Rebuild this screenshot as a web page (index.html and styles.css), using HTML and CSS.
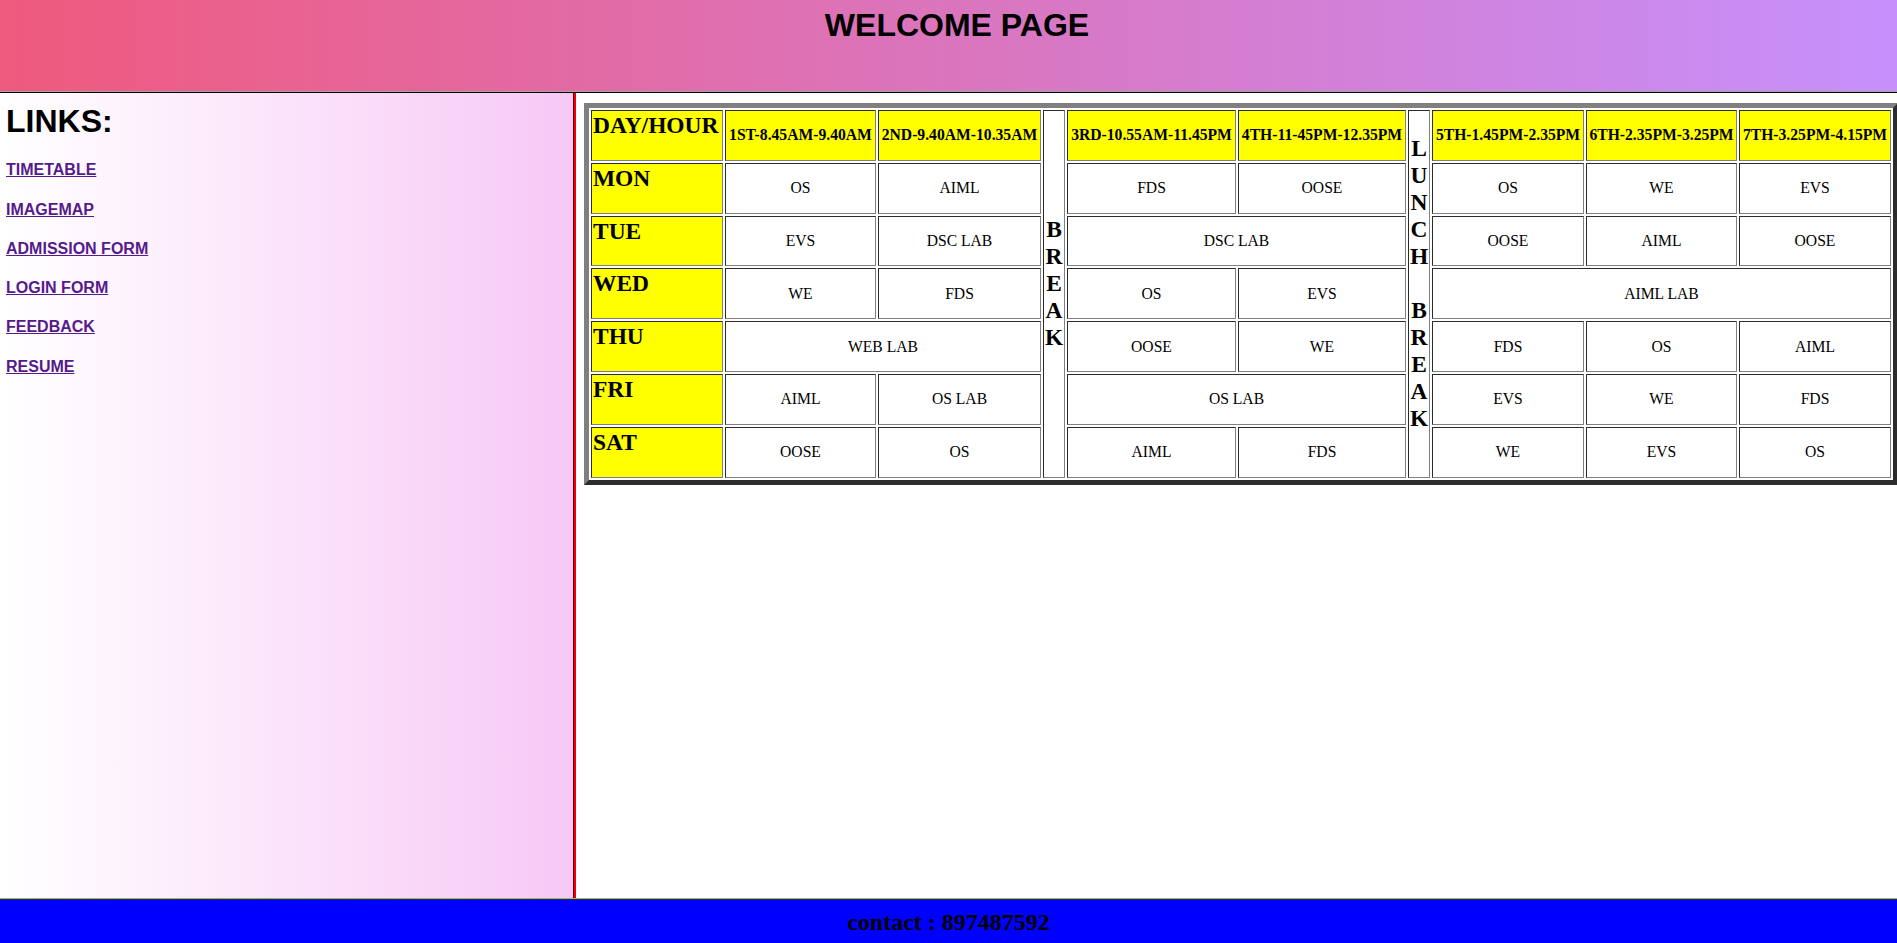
FILE: index.html
```html
<!DOCTYPE html>
<html>
<head>
<meta charset="utf-8">
<title>Welcome</title>
<link rel="stylesheet" href="styles.css">
</head>
<body>
<div class="page">
  <header class="top">
    <h1 class="top-title">WELCOME PAGE</h1>
  </header>
  <div class="middle">
    <nav class="side">
      <h1 class="side-title">LINKS:</h1>
      <h4 class="side-link"><a href="#">TIMETABLE</a></h4>
      <h4 class="side-link"><a href="#">IMAGEMAP</a></h4>
      <h4 class="side-link"><a href="#">ADMISSION FORM</a></h4>
      <h4 class="side-link"><a href="#">LOGIN FORM</a></h4>
      <h4 class="side-link"><a href="#">FEEDBACK</a></h4>
      <h4 class="side-link"><a href="#">RESUME</a></h4>
    </nav>
    <main class="content">
      <table class="tt">
        <colgroup>
          <col class="c-day">
          <col class="c1">
          <col class="c2">
          <col class="c-brk">
          <col class="c3">
          <col class="c4">
          <col class="c-brk">
          <col class="c5">
          <col class="c6">
          <col class="c7">
        </colgroup>
        <tr>
          <th class="day">DAY/HOUR</th>
          <th class="hour">1ST-8.45AM-9.40AM</th>
          <th class="hour">2ND-9.40AM-10.35AM</th>
          <th class="brk" rowspan="7">B<br>R<br>E<br>A<br>K</th>
          <th class="hour">3RD-10.55AM-11.45PM</th>
          <th class="hour">4TH-11-45PM-12.35PM</th>
          <th class="brk" rowspan="7">L<br>U<br>N<br>C<br>H<br><br>B<br>R<br>E<br>A<br>K</th>
          <th class="hour">5TH-1.45PM-2.35PM</th>
          <th class="hour">6TH-2.35PM-3.25PM</th>
          <th class="hour">7TH-3.25PM-4.15PM</th>
        </tr>
        <tr>
          <th class="day">MON</th>
          <td>OS</td><td>AIML</td>
          <td>FDS</td><td>OOSE</td>
          <td>OS</td><td>WE</td><td>EVS</td>
        </tr>
        <tr>
          <th class="day">TUE</th>
          <td>EVS</td><td>DSC LAB</td>
          <td colspan="2">DSC LAB</td>
          <td>OOSE</td><td>AIML</td><td>OOSE</td>
        </tr>
        <tr>
          <th class="day">WED</th>
          <td>WE</td><td>FDS</td>
          <td>OS</td><td>EVS</td>
          <td colspan="3">AIML LAB</td>
        </tr>
        <tr>
          <th class="day">THU</th>
          <td colspan="2">WEB LAB</td>
          <td>OOSE</td><td>WE</td>
          <td>FDS</td><td>OS</td><td>AIML</td>
        </tr>
        <tr>
          <th class="day">FRI</th>
          <td>AIML</td><td>OS LAB</td>
          <td colspan="2">OS LAB</td>
          <td>EVS</td><td>WE</td><td>FDS</td>
        </tr>
        <tr>
          <th class="day">SAT</th>
          <td>OOSE</td><td>OS</td>
          <td>AIML</td><td>FDS</td>
          <td>WE</td><td>EVS</td><td>OS</td>
        </tr>
      </table>
    </main>
  </div>
  <footer class="bottom">
    <h2 class="contact">contact : 897487592</h2>
  </footer>
</div>
</body>
</html>
```

FILE: styles.css
```css
html, body {
  margin: 0;
  padding: 0;
}

body {
  width: 1897px;
  height: 943px;
  overflow: hidden;
  background: #ffffff;
}

.page {
  display: flex;
  flex-direction: column;
  height: 943px;
}

.top {
  height: 91px;
  flex: none;
  background: linear-gradient(to right, #ef5a7e, #c690fc);
  border-bottom: 1px solid #a4a4a4;
  box-shadow: 0 1px 0 #000000;
  margin-bottom: 1px;
  box-sizing: content-box;
}

.top-title {
  margin: 0;
  padding-top: 7px;
  padding-left: 17px;
  text-align: center;
  font-family: "Liberation Sans", Arial, sans-serif;
  font-size: 32px;
  font-weight: bold;
  color: #000;
}

.middle {
  flex: 1;
  display: flex;
  min-height: 0;
}

.side {
  width: 574px;
  flex: none;
  background: linear-gradient(to right, #ffffff, #f7c8f6);
  border-right: 1px solid #5a0000;
  box-shadow: 1px 0 0 #f00000, 2px 0 0 #f00000;
  margin-right: 2px;
  padding-left: 6px;
  box-sizing: border-box;
  font-family: "Liberation Sans", Arial, sans-serif;
}

.side-title {
  margin: 10px 0 21.28px 0;
  font-size: 32px;
  font-weight: bold;
  color: #000;
}

.side-link {
  margin: 21.3px 0;
  font-size: 16px;
  font-weight: bold;
}

.side-link a {
  color: #551a8b;
  text-decoration: underline;
}

.content {
  flex: 1;
  min-width: 0;
  overflow: hidden;
  padding: 10px 0 0 8px;
  background: #ffffff;
}

.tt {
  border: 5px outset #808080;
  border-collapse: separate;
  border-spacing: 2px;
  table-layout: fixed;
  width: 1314px;
  font-family: "Liberation Serif", "Times New Roman", serif;
  font-size: 15.65px;
  color: #000;
}

.tt tr {
  height: 50.8px;
}

.tt th,
.tt td {
  border: 1px inset #808080;
  padding: 1px;
  text-align: center;
  vertical-align: middle;
  white-space: nowrap;
  overflow: hidden;
}

.tt td {
  font-weight: normal;
  background: #ffffff;
}

.c-day { width: 132px; }
.c1 { width: 151px; }
.c2 { width: 163px; }
.c-brk { width: 22px; }
.c3 { width: 169px; }
.c4 { width: 168px; }
.c5 { width: 152px; }
.c6 { width: 151px; }
.c7 { width: 152px; }

.tt .day {
  background: #ffff00;
  text-align: left;
  vertical-align: top;
  font-size: 23.45px;
  font-weight: bold;
}

.tt .hour {
  background: #ffff00;
  font-weight: bold;
}

.tt .brk {
  background: #ffffff;
  font-size: 23.45px;
  font-weight: bold;
  padding-bottom: 21px;
  overflow: visible;
}

.bottom {
  height: 43px;
  flex: none;
  background: #0000ff;
  border-top: 1px solid #a4a4a4;
  box-shadow: inset 0 1px 0 #1a3a1a;
  padding-top: 1px;
  box-sizing: content-box;
}

.contact {
  margin: 0;
  padding-top: 9px;
  text-align: center;
  font-family: "Liberation Serif", "Times New Roman", serif;
  font-size: 24px;
  font-weight: bold;
  color: #000;
}
```
